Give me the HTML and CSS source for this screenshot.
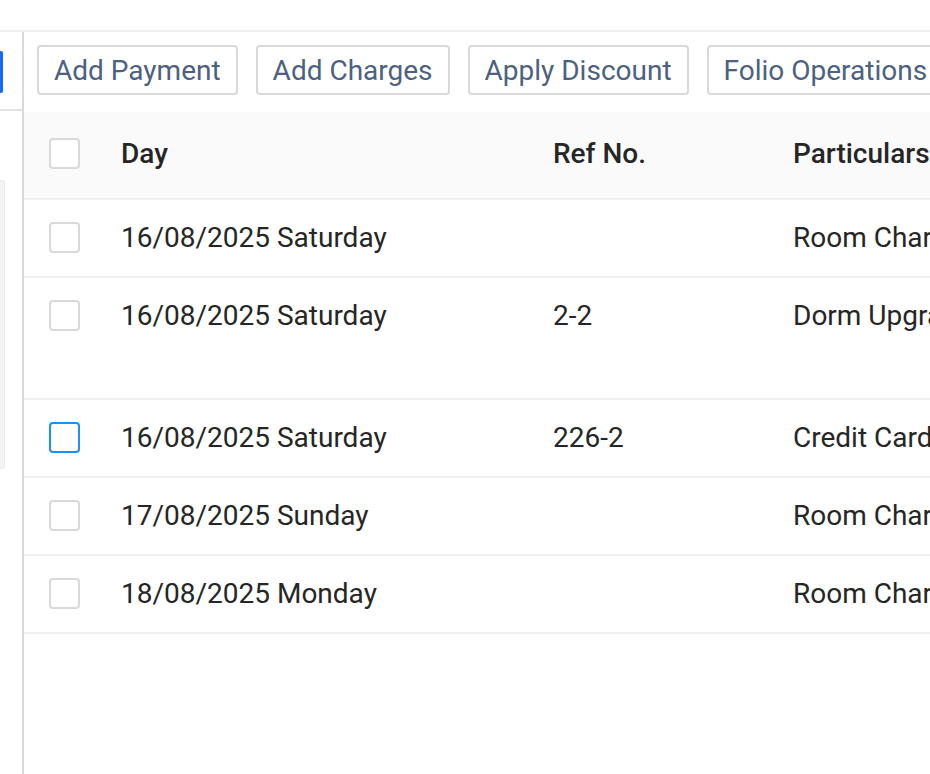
FILE: index.html
```html
<!DOCTYPE html>
<html lang="en">
<head>
    <meta charset="UTF-8">
    <meta name="viewport" content="width=device-width, initial-scale=1.0">
    <title>Folio</title>
    <link rel="stylesheet" href="styles.css">
</head>
<body>
    <div class="topbar"></div>
    <div class="layout">
        <div class="sidebar">
            <div class="side-tab"></div>
            <div class="side-divider"></div>
            <div class="side-card"></div>
        </div>

        <div class="main">
            <div class="toolbar">
                <button class="btn">Add Payment</button>
                <button class="btn">Add Charges</button>
                <button class="btn">Apply Discount</button>
                <button class="btn">Folio Operations</button>
            </div>

            <table class="folio-table">
                <colgroup>
                    <col class="col-check">
                    <col class="col-day">
                    <col class="col-ref">
                    <col class="col-part">
                </colgroup>
                <thead>
                    <tr>
                        <th class="check-cell"><span class="checkbox"></span></th>
                        <th>Day</th>
                        <th>Ref No.</th>
                        <th>Particulars</th>
                    </tr>
                </thead>
                <tbody>
                    <tr>
                        <td class="check-cell"><span class="checkbox"></span></td>
                        <td>16/08/2025 Saturday</td>
                        <td></td>
                        <td>Room Charges</td>
                    </tr>
                    <tr class="tall">
                        <td class="check-cell"><span class="checkbox"></span></td>
                        <td>16/08/2025 Saturday</td>
                        <td>2-2</td>
                        <td>Dorm Upgrade</td>
                    </tr>
                    <tr>
                        <td class="check-cell"><span class="checkbox focused"></span></td>
                        <td>16/08/2025 Saturday</td>
                        <td>226-2</td>
                        <td>Credit Card Payment</td>
                    </tr>
                    <tr>
                        <td class="check-cell"><span class="checkbox"></span></td>
                        <td>17/08/2025 Sunday</td>
                        <td></td>
                        <td>Room Charges</td>
                    </tr>
                    <tr>
                        <td class="check-cell"><span class="checkbox"></span></td>
                        <td>18/08/2025 Monday</td>
                        <td></td>
                        <td>Room Charges</td>
                    </tr>
                </tbody>
            </table>
        </div>
    </div>
</body>
</html>
```

FILE: styles.css
```css
body {
    margin: 0;
    font-family: Roboto, "Liberation Sans", Arial, sans-serif;
    background: white;
    overflow: hidden;
}

.topbar {
    height: 30px;
    border-bottom: 2px solid #efefef;
}

.layout {
    display: flex;
    height: calc(100vh - 32px);
}

.sidebar {
    width: 22px;
    flex-shrink: 0;
    border-right: 2px solid #d9d9d9;
}

.side-tab {
    width: 3px;
    height: 42px;
    margin-top: 19px;
    background: #1668ff;
    border-radius: 0 2px 2px 0;
}

.side-divider {
    height: 2px;
    margin-top: 16px;
    background: #e3e3e3;
}

.side-card {
    width: 4px;
    height: 287px;
    margin-top: 69px;
    background: #f4f4f4;
    border: 1px solid #ececec;
    border-left: none;
    border-radius: 0 3px 3px 0;
}

.main {
    flex: 1;
    min-width: 0;
    overflow: hidden;
}

.toolbar {
    display: flex;
    gap: 18px;
    padding: 13px 0 17px 13px;
    white-space: nowrap;
}

.btn {
    flex-shrink: 0;
    height: 50px;
    padding: 0 15px;
    background: white;
    border: 2px solid #d9d9d9;
    border-radius: 4px;
    font-family: inherit;
    font-size: 28px;
    color: #4c6180;
    cursor: pointer;
}

.folio-table {
    width: 1200px;
    table-layout: fixed;
    border-collapse: collapse;
    font-size: 28px;
    line-height: 44px;
    color: #262626;
}

.col-check { width: 73px; }
.col-day { width: 432px; }
.col-ref { width: 240px; }
.col-part { width: 455px; }

th, td {
    padding: 16px 24px;
    text-align: left;
    vertical-align: top;
    white-space: nowrap;
    overflow: hidden;
    border-bottom: 2px solid #f0f0f0;
}

th {
    padding-top: 20px;
    padding-bottom: 22px;
    background: #fafafa;
    font-weight: 500;
}

.check-cell {
    padding-left: 25px;
    padding-right: 0;
}

.checkbox {
    display: block;
    width: 27px;
    height: 27px;
    margin: 6px 0;
    border: 2px solid #d9d9d9;
    border-radius: 4px;
    background: white;
}

.checkbox.focused {
    border-color: #1890ff;
}

.tall td {
    padding-bottom: 60px;
}
```
